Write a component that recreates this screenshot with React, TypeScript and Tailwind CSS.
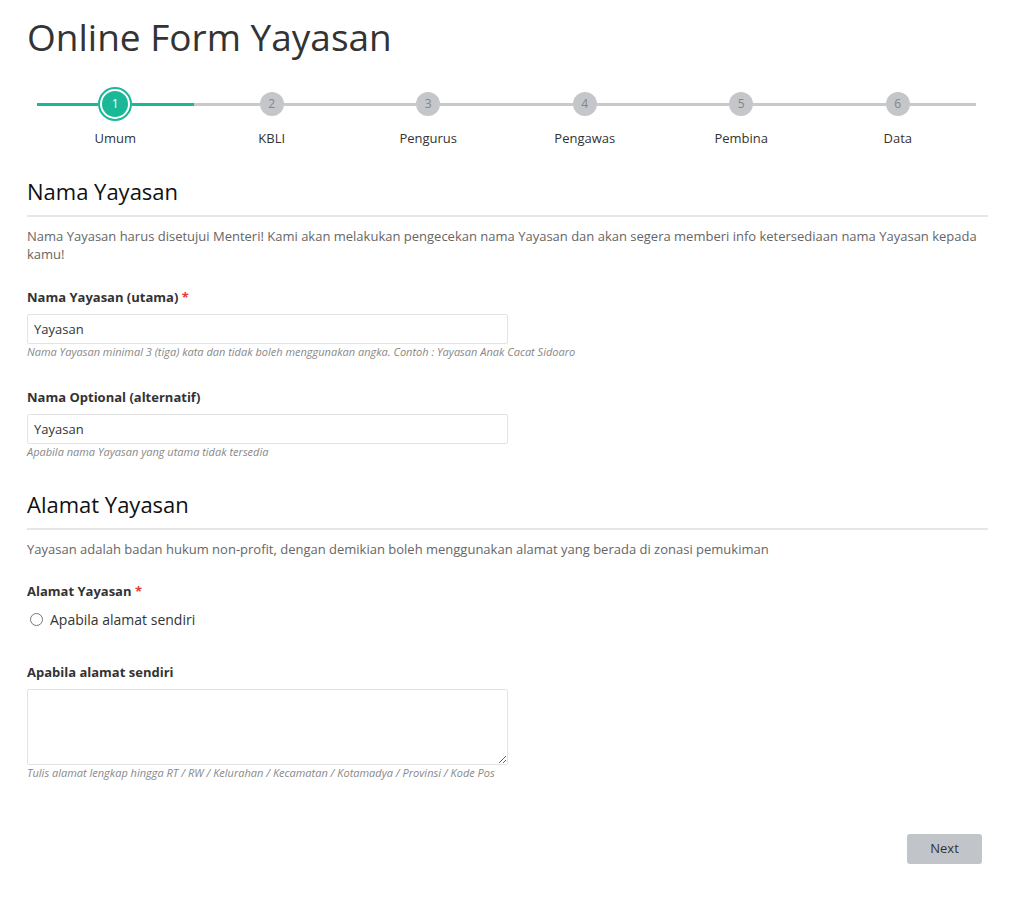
import React from 'react';

const steps = ['Umum', 'KBLI', 'Pengurus', 'Pengawas', 'Pembina', 'Data'];

const Stepper: React.FC<{ active: number }> = ({ active }) => (
    <div className="ml-[10px] mr-[12px] mt-[28px] grid grid-cols-6">
        {steps.map((label, i) => {
            const done = i <= active;
            return (
                <div key={label} className="flex flex-col items-center">
                    <div className="flex h-[34px] w-full items-center">
                        <div className={`h-[3px] flex-1 ${done ? 'bg-[#1ab896]' : 'bg-[#c8c9cb]'}`} />
                        {i === active ? (
                            <div className="h-[34px] w-[34px] rounded-full border-2 border-[#1ab896] bg-white p-[2px]">
                                <div className="flex h-full w-full items-center justify-center rounded-full bg-[#1ab896] text-[12px] text-white">
                                    {i + 1}
                                </div>
                            </div>
                        ) : (
                            <div className="flex h-[24px] w-[24px] items-center justify-center rounded-full bg-[#c4c6c9] text-[12px] text-[#858585]">
                                {i + 1}
                            </div>
                        )}
                        <div className={`h-[3px] flex-1 ${done ? 'bg-[#1ab896]' : 'bg-[#c8c9cb]'}`} />
                    </div>
                    <div className="mt-[8px] text-[13px] leading-[18px] text-[#333]">{label}</div>
                </div>
            );
        })}
    </div>
);

const SectionHead: React.FC<{ title: string; className?: string }> = ({ title, className }) => (
    <div className={className}>
        <h2 className="text-[22px] leading-[30px] text-[#111]">{title}</h2>
        <div className="mt-[9px] h-[2px] bg-[#e6e6e6]" />
    </div>
);

const Label: React.FC<{ text: string; required?: boolean; className?: string }> = ({ text, required, className }) => (
    <div className={`text-[13px] font-bold leading-[18px] text-[#333] ${className ?? ''}`}>
        {text} {required && <span className="text-[#e53935]">*</span>}
    </div>
);

const Help: React.FC<{ text: string }> = ({ text }) => (
    <div className="mt-[1px] text-[11px] italic leading-[14px] text-[#888]">{text}</div>
);

export default function App() {
    return (
        <div className="min-h-screen bg-white px-[27px] pb-10" style={{ fontFamily: '"Open Sans", "Liberation Sans", sans-serif' }}>
            <h1 className="pt-[15px] text-[37px] leading-[44px] text-[#333]">Online Form Yayasan</h1>

            <Stepper active={0} />

            <SectionHead title="Nama Yayasan" className="mt-[29px]" />
            <p className="mt-[10px] text-[13px] leading-[18px] text-[#666]">
                Nama Yayasan harus disetujui Menteri! Kami akan melakukan pengecekan nama Yayasan dan akan segera memberi info ketersediaan nama Yayasan kepada kamu!
            </p>

            <Label text="Nama Yayasan (utama)" required className="mt-[25px]" />
            <input
                defaultValue="Yayasan"
                className="mt-[8px] block h-[30px] w-[481px] rounded-[2px] border border-[#e3e3e3] px-[6px] text-[13px] text-[#333] outline-none"
            />
            <Help text="Nama Yayasan minimal 3 (tiga) kata dan tidak boleh menggunakan angka. Contoh : Yayasan Anak Cacat Sidoaro" />

            <Label text="Nama Optional (alternatif)" className="mt-[29px]" />
            <input
                defaultValue="Yayasan"
                className="mt-[8px] block h-[30px] w-[481px] rounded-[2px] border border-[#e3e3e3] px-[6px] text-[13px] text-[#333] outline-none"
            />
            <Help text="Apabila nama Yayasan yang utama tidak tersedia" />

            <SectionHead title="Alamat Yayasan" className="mt-[30px]" />
            <p className="mt-[10px] text-[13px] leading-[18px] text-[#666]">
                Yayasan adalah badan hukum non-profit, dengan demikian boleh menggunakan alamat yang berada di zonasi pemukiman
            </p>

            <Label text="Alamat Yayasan" required className="mt-[24px]" />
            <label className="mt-[9px] flex h-[20px] items-center gap-[7px] pl-[3px] text-[14px] text-[#333]">
                <span className="h-[13px] w-[13px] rounded-full border border-[#767676] bg-white" />
                Apabila alamat sendiri
            </label>

            <Label text="Apabila alamat sendiri" className="mt-[34px]" />
            <textarea className="mt-[8px] block h-[76px] w-[481px] rounded-[2px] border border-[#e3e3e3] px-[6px] py-[4px] text-[13px] outline-none" />
            <Help text="Tulis alamat lengkap hingga RT / RW / Kelurahan / Kecamatan / Kotamadya / Provinsi / Kode Pos" />

            <div className="mt-[54px] flex justify-end pr-[6px]">
                <button className="h-[30px] w-[75px] rounded-[3px] bg-[#c1c5c9] text-[13px] text-[#333]">Next</button>
            </div>
        </div>
    );
}
